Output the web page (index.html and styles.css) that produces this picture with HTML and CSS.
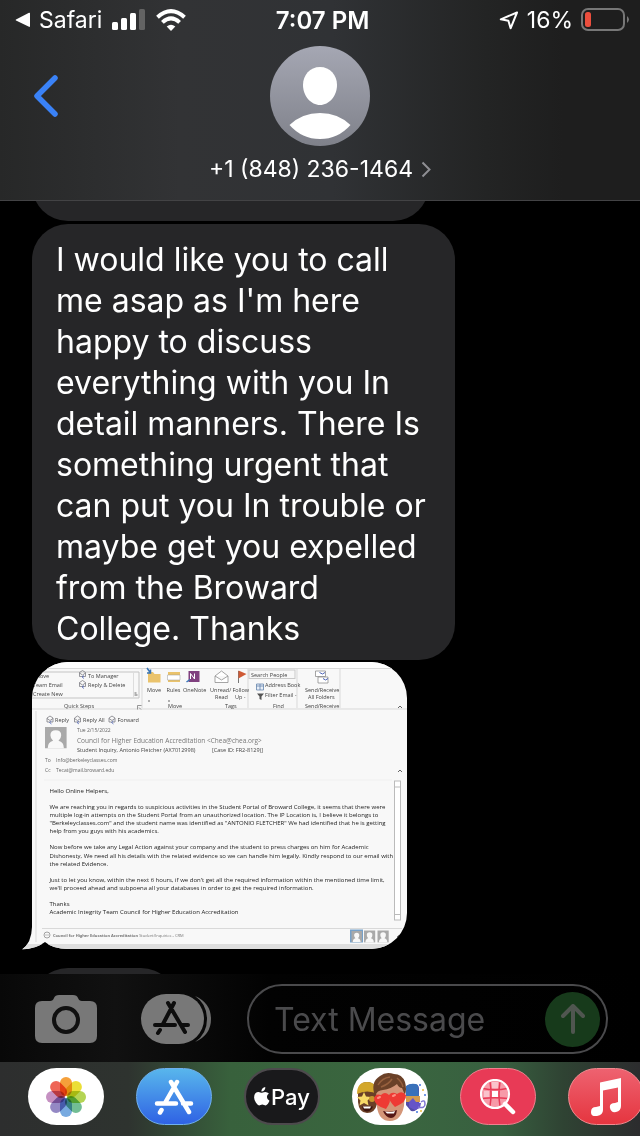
FILE: index.html
```html
<!DOCTYPE html>
<html lang="en">
<head>
<meta charset="utf-8">
<meta name="viewport" content="width=device-width, initial-scale=1">
<title>Messages</title>
<link rel="stylesheet" href="styles.css">
</head>
<body>
<header class="header">
  <div class="status">
    <div class="status-left">
      <a class="status-back" href="#">
        <svg width="16" height="16" viewBox="0 0 16 16" aria-hidden="true"><path d="M1 7.6 14 .8q1-.4 1 .8v12.400q0 1.200-1 .8L1 8.400Q.2 8 1 7.600Z" fill="#fff"/></svg>
        <span>Safari</span>
      </a>
      <svg width="34" height="22" viewBox="0 0 34 22" aria-hidden="true"><g fill="#fff"><rect x="0" y="13" width="6" height="8" rx="1.500"/><rect x="9" y="9" width="6" height="12" rx="1.500"/><rect x="18" y="4" width="6" height="17" rx="1.500"/></g><rect x="27" y="0" width="6" height="21" rx="1.500" fill="#636363"/></svg>
      <svg width="30" height="22" viewBox="0 0 30 22" aria-hidden="true"><g fill="none" stroke="#fff" stroke-width="4"><path d="M1.500 8.200Q15-4 28.500 8.200"/><path d="M6.400 13.400Q15 5.500 23.600 13.400"/></g><path d="M15 22 10.700 17.500Q15 13.800 19.300 17.500Z" fill="#fff"/></svg>
    </div>
    <time class="status-time">7:07 PM</time>
    <div class="status-right">
      <svg width="20" height="19" viewBox="0 0 20 19" aria-hidden="true"><path d="M18 1.500 1.800 8.300 9.400 9.700 11.600 17.300Z" fill="none" stroke="#fff" stroke-width="2" stroke-linejoin="round"/></svg>
      <span>16%</span>
      <svg width="49" height="24" viewBox="0 0 49 24" aria-hidden="true"><rect x="1" y="1" width="42" height="21" rx="6" fill="none" stroke="#777" stroke-width="2"/><rect x="4" y="4" width="6" height="15" rx="2.500" fill="#eb4e3d"/><path d="M46 8q4 3.500 0 7Z" fill="#777"/></svg>
    </div>
  </div>
  <div class="nav">
    <button class="back" type="button" aria-label="Back">
      <svg width="28" height="44" viewBox="0 0 28 44"><path d="M23 4 5 22 23 40" fill="none" stroke="#3a82f7" stroke-width="5.500" stroke-linecap="round" stroke-linejoin="round"/></svg>
    </button>
    <a class="contact" href="#">
      <svg width="100" height="100" viewBox="0 0 100 100" aria-hidden="true">
        <defs><linearGradient id="av" x1="0" y1="0" x2="0" y2="1"><stop offset="0" stop-color="#a5a7b3"/><stop offset="1" stop-color="#7f818a"/></linearGradient></defs>
        <circle cx="50" cy="50" r="50" fill="url(#av)"/>
        <path d="M50 21c-10 0-17 8-17 18 0 11 8 20 17 20s17-9 17-20c0-10-7-18-17-18Z" fill="#fff"/>
        <path d="M19.500 79Q32 67 50 67T80.500 79Q68 93 50 93T19.500 79Z" fill="#fff"/>
      </svg>
      <span class="contact-name">+1 (848) 236-1464
        <svg width="10" height="17" viewBox="0 0 10 17" aria-hidden="true"><path d="M1.500 1.500 8.500 8.500 1.500 15.500" fill="none" stroke="#8e8e93" stroke-width="2"/></svg>
      </span>
    </a>
    <span></span>
  </div>
</header>

<main class="chat">
  <div class="bubble bubble-before"></div>
  <p class="bubble bubble-text">I would like you to call me asap as I'm here happy to discuss everything with you In detail manners. There Is something urgent that can put you In trouble or maybe get you expelled from the Broward College. Thanks</p>
  <svg class="photo" viewBox="-22 0 772 576" role="img" aria-label="Photo of an email">
    <defs>
      <clipPath id="bubbleShape"><path d="M72 0H678A72 72 0 0 1 750 72V502A72 72 0 0 1 678 574H72Q42 574 26 560Q8 574-20 575Q-1 562 0 530V72A72 72 0 0 1 72 0Z"/></clipPath>
      <g id="person"><rect width="32" height="34" fill="#a9a9a9"/><path d="M4 34q0-10 8-12-4-4-4-9 0-8 8-8t8 8q0 5-4 9 8 2 8 12Z" fill="#f8f8f8"/></g>
      <g id="envelope" fill="none" stroke="#77777d" stroke-width="1.500"><path d="M1 5 7 1l6 4v8H1Z"/><path d="m1 6 6 4 6-4"/><path d="m10 11-4 3 4 3" stroke="#4b62b5"/></g>
    </defs>
    <g clip-path="url(#bubbleShape)">
      <rect x="-22" width="772" height="576" fill="#f8f8f8"/>
      <rect x="-22" width="772" height="13" fill="#fdfdfd"/>
      <rect x="-22" y="564" width="772" height="12" fill="#dedede"/>
      <g fill="none" stroke="#d9d9d9" stroke-width="2">
        <path d="M0 13H750M0 94H750M220 14V92M432 14V92M530 14V92M616 14V92M8 98V560M20 533H740"/>
        <path d="M0 20H214V72H0" stroke="#c4c4c4"/>
        <path d="M203 20V72" stroke="#ddd"/>
        <rect x="434" y="16" width="92" height="17" stroke="#c9c9c9"/>
        <rect x="725" y="238" width="12" height="278" fill="#fff" stroke="#bbb"/>
        <path d="M725 250H737M725 505H737" stroke="#bbb"/>
        <path d="M24 236H720" stroke="#f0f0f0"/>
      </g>
      <g class="mail-ui">
        <text x="6" y="31">Move</text><text x="2" y="49">Team Email</text><text x="2" y="67">Create New</text>
        <text x="112" y="31">To Manager</text><text x="112" y="49">Reply &amp; Delete</text>
        <text x="64" y="92">Quick Steps</text><text x="230" y="60">Move</text><text x="269" y="60">Rules</text><text x="302" y="60">OneNote</text><text x="272" y="92">Move</text>
        <text x="356" y="60">Unread/</text><text x="366" y="74">Read</text><text x="401" y="60">Follow</text><text x="406" y="74">Up -</text><text x="386" y="92">Tags</text>
        <text x="438" y="29">Search People</text><text x="466" y="50">Address Book</text><text x="466" y="70">Filter Email -</text><text x="482" y="92">Find</text>
        <text x="546" y="60">Send/Receive</text><text x="552" y="74">All Folders</text><text x="546" y="92">Send/Receive</text>
        <text x="46" y="119">Reply</text><text x="102" y="119">Reply All</text><text x="171" y="119">Forward</text>
      </g>
      <use href="#envelope" x="94" y="16"/><use href="#envelope" x="94" y="36"/>
      <use href="#envelope" x="29" y="107"/><use href="#envelope" x="84" y="107"/><use href="#envelope" x="153" y="107"/>
      <path d="M232 20h10l3 4h12v17h-25Z" fill="#eac36c"/><path d="m230 12 7 10m0-7v7h-7" fill="none" stroke="#3975b7" stroke-width="3"/>
      <path d="M272 20h24v20h-24Z" fill="#eac36c"/><path d="M271 26h25v10h-25Z" fill="#fff" stroke="#999"/>
      <path d="M313 18h22v22h-22Z" fill="#80407f"/><path d="M317 34V23l8 11V23" fill="none" stroke="#fff" stroke-width="2"/><path d="m309 40 7-5" stroke="#3975b7" stroke-width="3"/>
      <path d="m366 28 13-10 13 10v13h-26Zm0 0 13 8 13-8" fill="#fff" stroke="#888" stroke-width="1.500"/>
      <path d="M413 18v24" stroke="#777" stroke-width="2"/><path d="M413 17l16 7-16 9Z" fill="#cf5a35"/>
      <path d="M449 44h14v12h-14Zm0 4h14M456 44v12" fill="#e7eef7" stroke="#5d7fa8" stroke-width="1.500"/>
      <path d="M450 63h14l-5 6v7l-4-2v-5Z" fill="#555"/>
      <path d="M567 18h20v11h-20Zm5 12h20v12h-20Z" fill="#fff" stroke="#888" stroke-width="1.500"/><path d="m575 21 6 3 5-3m-4 12 5 3 5-3" fill="none" stroke="#4b62b5" stroke-width="2"/>
      <path d="m732 92 4-4 4 4m-8 128 4-4 4 4M205 62h4M205 66h6M232 78h4m36 0h4" fill="none" stroke="#666" stroke-width="2"/>
      <path d="M211 87h8m-8 0v8m3-4 4 4" fill="none" stroke="#777" stroke-width="1.500"/>
      <use href="#person" transform="translate(26 130) scale(1.350 1.250)"/>
      <text class="mail-date" x="90" y="139">Tue 2/15/2022</text>
      <text class="mail-from" x="90" y="161">Council for Higher Education Accreditation &lt;Chea@chea.org&gt;</text>
      <text class="mail-ui" x="90" y="180">Student Inquiry, Antonio Fletcher</text><text class="mail-ui" x="263" y="180">(AX7012998)</text><text class="mail-ui" x="360" y="180">[Case ID: FR2-8129)]</text>
      <g class="mail-date"><text x="26" y="200">To</text><text x="48" y="200">Info@berkeleyclasses.com</text><text x="26" y="219">Cc</text><text x="48" y="219">Tecat@mail.broward.edu</text></g>
      <g class="mail-body">
        <text x="35" y="261">Hello Online Helpers,</text>
        <text x="35" y="293">We are reaching you in regards to suspicious activities in the Student Portal of Broward College, it seems that there were</text>
        <text x="35" y="309">multiple log-in attempts on the Student Portal from an unauthorized location. The IP Location is, I believe it belongs to</text>
        <text x="35" y="326">"Berkeleyclasses.com" and the student name was identified as "ANTONIO FLETCHER" We had identified that he is getting</text>
        <text x="35" y="342">help from you guys with his academics.</text>
        <text x="35" y="374">Now before we take any Legal Action against your company and the student to press charges on him for Academic</text>
        <text x="35" y="391">Dishonesty, We need all his details with the related evidence so we can handle him legally. Kindly respond to our email with</text>
        <text x="35" y="407">the related Evidence.</text>
        <text x="35" y="439">Just to let you know, within the next 6 hours, if we don't get all the required information within the mentioned time limit,</text>
        <text x="35" y="455">we'll proceed ahead and subpoena all your databases in order to get the required information.</text>
        <text x="35" y="487">Thanks</text>
        <text x="35" y="504">Academic Integrity Team Council for Higher Education Accreditation</text>
      </g>
      <circle cx="30" cy="546" r="6" fill="none" stroke="#888" stroke-width="1.500"/><path d="M26 546h8" stroke="#888"/>
      <text class="mail-foot" x="42" y="549"><tspan class="mail-strong">Council for Higher Education Accreditation</tspan> Student/Inquiries - CRM</text>
      <rect x="636" y="535" width="26" height="26" fill="#77a1c9"/>
      <use href="#person" transform="translate(639 538) scale(.65)"/><use href="#person" transform="translate(664 537) scale(.7)"/><use href="#person" transform="translate(691 537) scale(.7)"/>
      <path d="m730 550 4-4 4 4" fill="none" stroke="#777" stroke-width="2"/>
    </g>
  </svg>
  <div class="bubble bubble-after"></div>
</main>

<form class="composer">
  <button class="tool" type="button" aria-label="Camera">
    <svg width="62" height="48" viewBox="0 0 62 48"><path d="M7 6h8q3 0 4-3 1-3 5-3h14q4 0 5 3t4 3h8q7 0 7 7v28q0 7-7 7H7q-7 0-7-7V13q0-7 7-7Z" fill="#787878"/><circle cx="31" cy="25" r="12" fill="none" stroke="#101010" stroke-width="4"/></svg>
  </button>
  <button class="tool" type="button" aria-label="Apps">
    <svg width="70" height="50" viewBox="0 0 70 50">
      <path d="M54 2Q70 9 70 25T54 48Q66 40 66 25T54 2Z" fill="#6e6e6e"/>
      <rect width="63" height="50" rx="25" fill="#787878"/>
      <g fill="none" stroke="#0d0d0d" stroke-width="4" stroke-linecap="round"><path d="M33 9 22 30M27 9 44 38M14 31H34M41 31H47M19 36l-2 3"/></g>
    </svg>
  </button>
  <div class="field">
    <input class="field-input" type="text" aria-label="Text Message" placeholder="Text Message">
    <button class="send" type="submit" aria-label="Send">
      <svg width="24" height="30" viewBox="0 0 24 30"><path d="M12 28V3M2 12 12 2 22 12" fill="none" stroke="#505650" stroke-width="4" stroke-linecap="round" stroke-linejoin="round"/></svg>
    </button>
  </div>
</form>

<nav class="dock" aria-label="Message apps">
  <button class="app app-photos" type="button" aria-label="Photos">
    <svg width="40" height="40" viewBox="-20 -20 40 40"><g class="petals">
      <rect x="-6" y="-20" width="12" height="19" rx="6" fill="#f5a03a"/>
      <rect x="-6" y="-20" width="12" height="19" rx="6" fill="#ebdf36" transform="rotate(45)"/>
      <rect x="-6" y="-20" width="12" height="19" rx="6" fill="#b4d454" transform="rotate(90)"/>
      <rect x="-6" y="-20" width="12" height="19" rx="6" fill="#72bd94" transform="rotate(135)"/>
      <rect x="-6" y="-20" width="12" height="19" rx="6" fill="#78aae0" transform="rotate(180)"/>
      <rect x="-6" y="-20" width="12" height="19" rx="6" fill="#9488c4" transform="rotate(225)"/>
      <rect x="-6" y="-20" width="12" height="19" rx="6" fill="#c591c2" transform="rotate(270)"/>
      <rect x="-6" y="-20" width="12" height="19" rx="6" fill="#ee6557" transform="rotate(315)"/>
    </g></svg>
  </button>
  <button class="app app-store" type="button" aria-label="App Store">
    <svg width="40" height="36" viewBox="0 0 40 36"><path d="M23 3 11 24M17 3 35 33M3 24.500H22M29 24.500H37M7.500 31l-1.500 2.500" fill="none" stroke="#fff" stroke-width="4.500" stroke-linecap="round"/></svg>
  </button>
  <button class="app app-pay" type="button" aria-label="Apple Pay">
    <svg width="16" height="19" viewBox="0 0 16 19" aria-hidden="true"><path d="M11.300 0q.2 1.800-1 3.200T7.400 4.500Q7.200 2.800 8.400 1.500T11.300 0ZM14.900 6.500q-2 1.200-2 3.500t2.600 3.800q-.6 1.700-1.600 3T11.700 18.400q-.8 0-1.700-.4-1.700-.8-3.400 0-.9.4-1.500.4Q3.800 18.400 2 15.800T.1 10.400Q.1 7.700 1.400 6.300T4.500 4.900q.9 0 1.900.5 1.200.6 2.400 0 1.300-.5 2.400-.5 2.200 0 3.700 1.600Z" fill="#fff"/></svg><span>Pay</span>
  </button>
  <button class="app app-memoji" type="button" aria-label="Memoji">
    <svg width="76" height="57" viewBox="0 0 76 57">
      <path d="M6 26q0-12 9-12t10 12v10q-2 9-10 9T6 34Z" fill="#6b4027"/>
      <path d="M5 26Q5 14 15 14t11 12Q15 21 5 26Z" fill="#d3a72b"/>
      <path d="m12 24 2 4.500 5 .5-3.500 3.500 1 5L12 35l-4.500 2.500 1-5L5 29l5-.5Z" fill="#f8da68"/>
      <circle cx="20" cy="31" r="3" fill="#c8952c"/>
      <path d="M10 38.500h11q-2 5-6 5t-5-5Z" fill="#3d150e"/><path d="M11 38.500h8l-1 2h-6Z" fill="#fff"/>
      <path d="M54 20q0-4 8-4 5 0 5 5v18q-3 5-8 4l-5-6Z" fill="#514ca8"/>
      <path d="M54 18q6-4 12-1l1 11H54Z" fill="#3971ba"/>
      <path d="M54 28h14v6H54Z" fill="#d59b4d"/>
      <path d="m57 34 4-4 3 4 5 1-1 5-5 2-6-3Z" fill="#6555c8"/>
      <path d="M66 39q7 2 7-3t-4-2" fill="none" stroke="#8075d4" stroke-width="1.500"/>
      <g fill="#4477dc"><circle cx="68" cy="17" r="1"/><circle cx="73" cy="27" r="1"/><circle cx="65" cy="44" r="1"/></g><g fill="#ebb83d"><circle cx="71" cy="22" r="1"/><circle cx="69" cy="43" r="1"/></g>
      <path d="M24 22Q26 12 38 12t15 12l-1 14q-3 15-14 15T25 39Z" fill="#d49678"/>
      <path d="M23 28Q18 14 28 8q6-5 14-2 8 0 11 8 2 7 0 13l-3-7q-3 0-5-4-6 5-14 6-6 0-8 6Z" fill="#6b4128"/>
      <path d="M26 17q4-7 12-8M29 19q8-3 11-8M45 10q5 4 6 9" fill="none" stroke="#96603e" stroke-width="1.500"/>
      <path d="M34 41Q23 38 22 31q1-6 7-4 4-4 8 0 3 6-3 14Z" fill="#ee3a34"/>
      <path d="M43 39q-7-7-6-12 3-4 8-1 5-4 9 1 1 7-11 12Z" fill="#ee3a34"/>
      <path d="M26 30l2-1m13-1 2-1" stroke="#ff8d80" stroke-width="2" stroke-linecap="round"/>
      <path d="M31 43q8 2 14-1-1 8-6 8t-8-7Z" fill="#551714"/><path d="M33 43.500q6 1 10-.5l-1 2.500h-7Z" fill="#fff"/>
    </svg>
  </button>
  <button class="app app-images" type="button" aria-label="Images">
    <svg width="36" height="36" viewBox="0 0 36 36"><circle cx="15" cy="15" r="13" fill="#f79aa8"/><g fill="#fff"><path d="M4 12h5v6H4ZM12 3h6v6h-6Z" fill-opacity=".4"/><path d="M12 12h6v6h-6Z"/></g><path d="M3 9.500Q15 12 27 9.500M2 19.500Q15 18 28 19.500M10 3Q12 15 10 27M20 3Q18 15 20 27" fill="none" stroke="#e83a56" stroke-width="1.500"/><circle cx="15" cy="15" r="14" fill="none" stroke="#fff" stroke-width="2.200"/><path d="m25 25 8 8" stroke="#fff" stroke-width="4.500" stroke-linecap="round"/></svg>
  </button>
  <button class="app app-music" type="button" aria-label="Music">
    <svg width="30" height="38" viewBox="0 0 30 38"><path d="M9 4.500 30 0V28Q30 33 25 34T19 30 24 25L27 24V9.500L12 12.500V32Q12 37 6 38T0 34 5 29L9 28Z" fill="#fff"/></svg>
  </button>
</nav>
</body>
</html>
```
FILE: styles.css
```css
* {
  box-sizing: border-box;
}

body {
  margin: 0;
  height: 100vh;
  display: flex;
  flex-direction: column;
  overflow: hidden;
  background: #000;
  color: #fff;
  font-family: Inter, "Liberation Sans", sans-serif;
}

button {
  padding: 0;
  border: 0;
  background: none;
  color: inherit;
  font: inherit;
}

a {
  color: inherit;
  text-decoration: none;
}

svg {
  display: block;
  flex: none;
}

.header {
  flex: none;
  position: relative;
  z-index: 1;
  padding-bottom: 16px;
  border-bottom: 1px solid #434345;
  background: linear-gradient(90deg, #272828 0%, #323335 28%, #303235 52%, #232424 76%, #1e1e1e 88%);
}

.status {
  display: grid;
  grid-template-columns: 1fr auto 1fr;
  align-items: center;
  height: 40px;
  padding: 0 10px 0 15px;
  font-size: 23px;
}

.status-left,
.status-back {
  display: flex;
  align-items: center;
  gap: 8px;
}

.status-left {
  gap: 10px;
}

.status-right {
  display: flex;
  align-items: center;
  justify-content: flex-end;
  gap: 8px;
}

.status-time {
  font-size: 24px;
  font-weight: 600;
}

.nav {
  display: grid;
  grid-template-columns: 1fr auto 1fr;
  padding: 6px 32px 0;
}

.back {
  justify-self: start;
  align-self: start;
  padding-top: 28px;
}

.contact {
  display: flex;
  flex-direction: column;
  align-items: center;
  gap: 8px;
}

.contact-name {
  display: flex;
  align-items: center;
  gap: 8px;
  font-size: 23px;
  line-height: 30px;
}

.chat {
  flex: 1;
  min-height: 0;
  overflow: hidden;
  padding: 0 32px;
}

.bubble {
  margin: 0;
  border-radius: 36px;
  background: #262628;
}

.bubble-before {
  width: 69%;
  height: 80px;
  margin: -60px 0 3px;
}

.bubble-text {
  width: 423px;
  max-width: 100%;
  padding: 15px 24px 11px;
  font-size: 32px;
  line-height: 41px;
}

.photo {
  width: 386px;
  max-width: 100%;
  margin: 2px 0 18px -11px;
  font-family: "Open Sans", "Noto Sans", sans-serif;
}

.mail-ui {
  font-size: 11px;
  fill: #444;
}

.mail-date {
  font-size: 10px;
  fill: #666;
}

.mail-from {
  font-size: 13px;
  fill: #777;
}

.mail-body {
  font-size: 12px;
  fill: #222;
}

.mail-foot {
  font-size: 8px;
  fill: #777;
}

.mail-strong {
  font-weight: 700;
}

.bubble-after {
  width: 145px;
  height: 80px;
}

.composer {
  flex: none;
  position: relative;
  display: flex;
  align-items: center;
  gap: 36px;
  height: 88px;
  padding: 2px 32px 0 35px;
  background: linear-gradient(90deg, #080808, #111 18%, #020202 42%, #000);
}

.tool:first-child {
  margin-right: 8px;
}

.field {
  flex: 1;
  min-width: 0;
  display: flex;
  align-items: center;
  height: 70px;
  padding: 0 6px 0 25px;
  border: 2px solid #4a4a4c;
  border-radius: 35px;
}

.field-input {
  flex: 1;
  min-width: 0;
  padding: 0;
  border: 0;
  outline: 0;
  background: none;
  color: #fff;
  font: inherit;
  font-size: 32px;
}

.field-input::placeholder {
  color: #4a4a4c;
  opacity: 1;
}

.send {
  flex: none;
  display: grid;
  place-items: center;
  width: 55px;
  height: 55px;
  border-radius: 50%;
  background: #173a1b;
}

.dock {
  flex: none;
  display: flex;
  gap: 32px;
  height: 74px;
  padding: 6px 0 0 28px;
  overflow: hidden;
  background: linear-gradient(90deg, #2d2e2e 0%, #2e332f 20%, #38613c 36%, #3a663f 60%, #386040 78%, #2f4333 88%, #2c2c2e 100%);
}

.app {
  flex: none;
  display: flex;
  align-items: center;
  justify-content: center;
  width: 76px;
  height: 57px;
  border-radius: 29px;
}

.app-photos,
.app-memoji {
  background: #fff;
}

.petals rect {
  mix-blend-mode: multiply;
}

.app-store {
  border: 1px solid #6fb0ee;
  background: linear-gradient(#58b6ec, #2f62e4);
}

.app-pay {
  gap: 1px;
  border: 2px solid #4d4a4d;
  background: #19191b;
  font-size: 22px;
  font-weight: 500;
}

.app-images {
  border: 1px solid #f0808f;
  background: #e83a56;
}

.app-music {
  border: 1px solid #f28a90;
  background: linear-gradient(#ee6270, #e5353f);
}
```
